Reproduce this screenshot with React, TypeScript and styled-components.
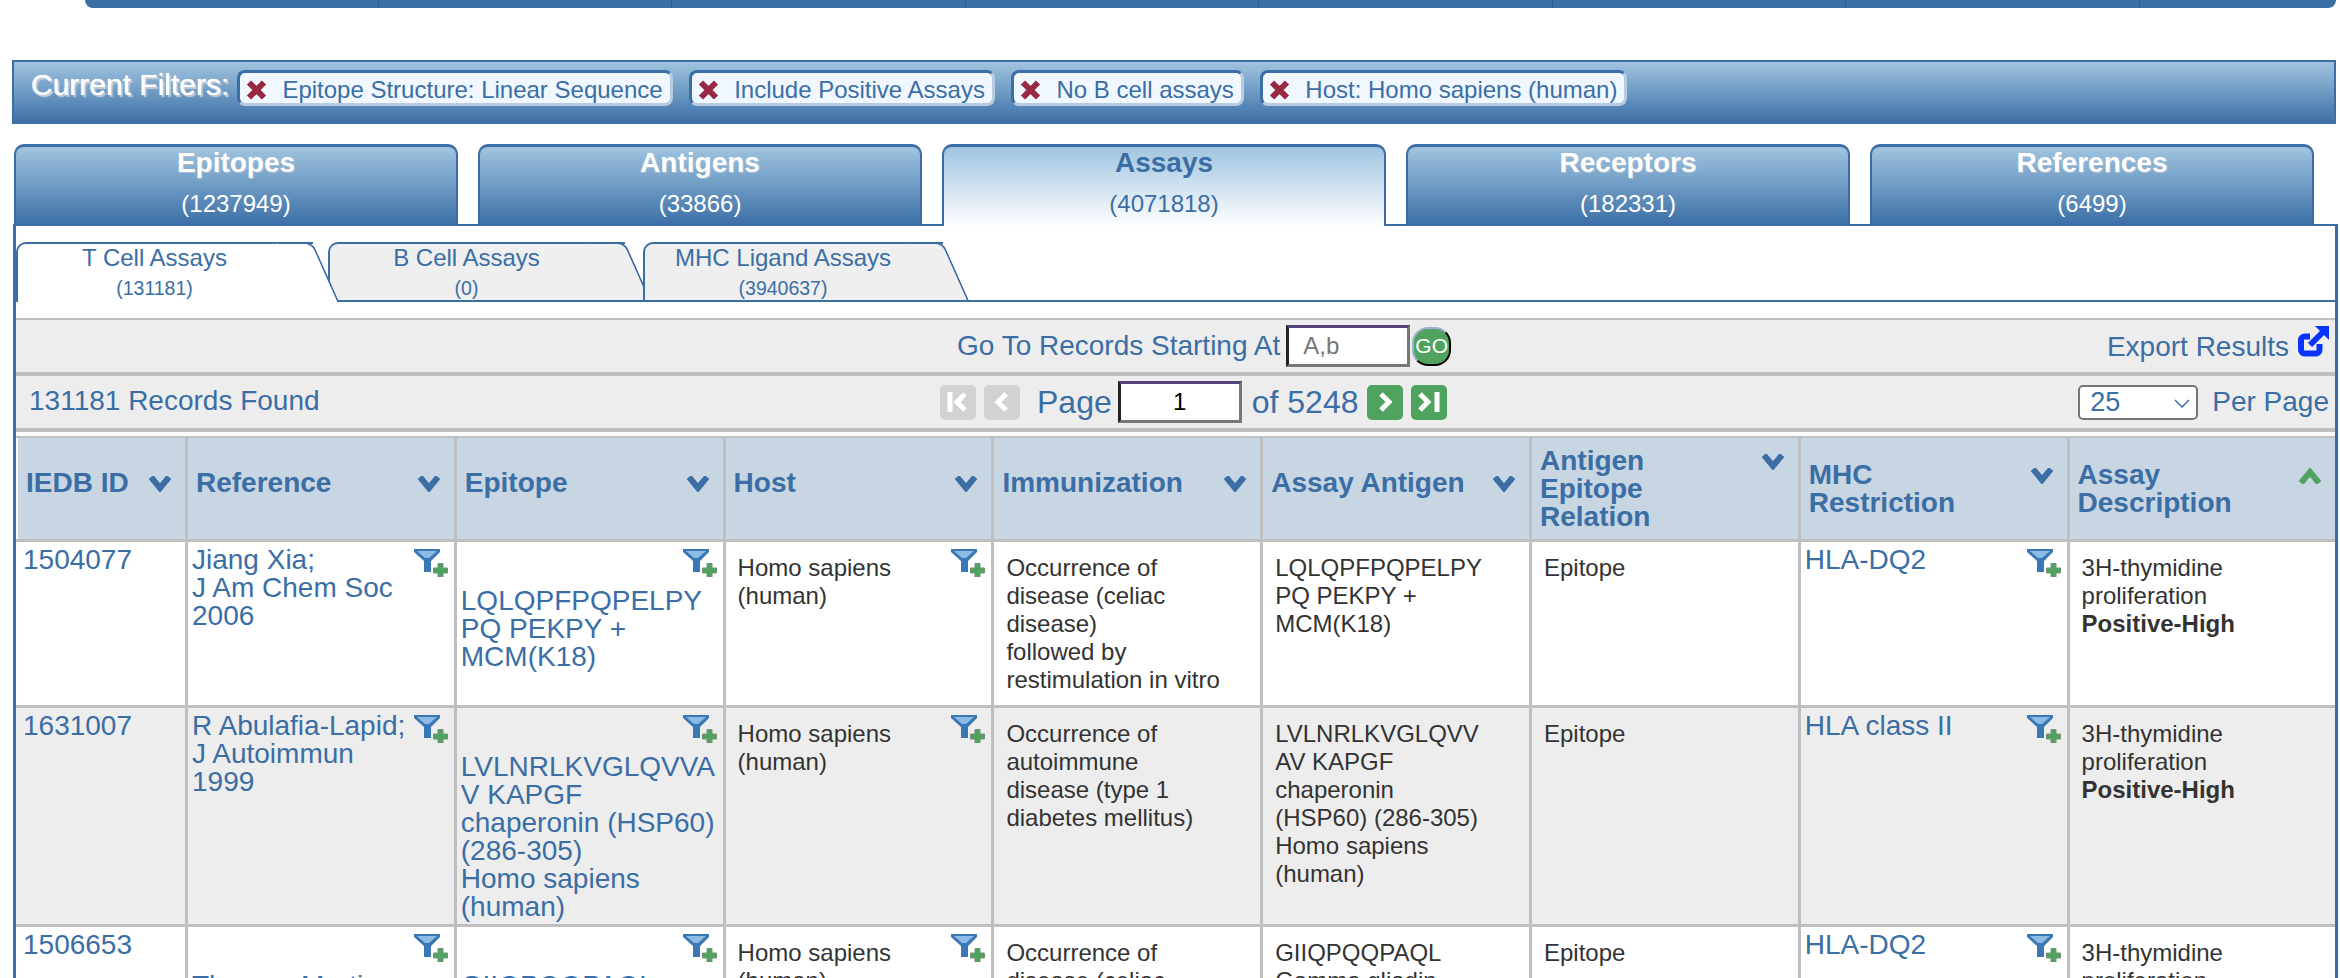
import React from 'react';
import styled, { createGlobalStyle } from 'styled-components';

const BLUE = '#3a6ea5';
const GREEN = '#50a35f';
const GRID = '#bfbfbf';
const BAND = '#ededed';

type RowData = {
    id: string,
    reference: string[],
    epitope: string[],
    host: string[],
    process: string[],
    antigen: string[],
    mhc: string,
    shaded?: boolean,
}

const FILTERS = [
    'Epitope Structure: Linear Sequence',
    'Include Positive Assays',
    'No B cell assays',
    'Host: Homo sapiens (human)',
];

const MAIN_TABS = [
    { label: 'Epitopes', count: 1237949 },
    { label: 'Antigens', count: 33866 },
    { label: 'Assays', count: 4071818, active: true },
    { label: 'Receptors', count: 182331 },
    { label: 'References', count: 6499 },
];

const SUB_TABS = [
    { label: 'T Cell Assays', count: 131181, active: true, width: 297, gap: 15, layer: 3 },
    { label: 'B Cell Assays', count: 0, width: 297, gap: 18, layer: 1 },
    { label: 'MHC Ligand Assays', count: 3940637, width: 300, gap: 0, layer: 2 },
];

const COLUMNS = [
    { label: ['IEDB ID'] },
    { label: ['Reference'] },
    { label: ['Epitope'] },
    { label: ['Host'] },
    { label: ['Immunization'] },
    { label: ['Assay Antigen'] },
    { label: ['Antigen', 'Epitope', 'Relation'] },
    { label: ['MHC', 'Restriction'] },
    { label: ['Assay', 'Description'], ascending: true },
];

const ROWS: RowData[] = [
    {
        id: '1504077',
        reference: ['Jiang Xia;', 'J Am Chem Soc', '2006'],
        epitope: ['LQLQPFPQPELPY', 'PQ PEKPY +', 'MCM(K18)'],
        host: ['Homo sapiens', '(human)'],
        process: ['Occurrence of', 'disease (celiac', 'disease)', 'followed by', 'restimulation in vitro'],
        antigen: ['LQLQPFPQPELPY', 'PQ PEKPY +', 'MCM(K18)'],
        mhc: 'HLA-DQ2',
    },
    {
        id: '1631007',
        reference: ['R Abulafia-Lapid;', 'J Autoimmun', '1999'],
        epitope: ['LVLNRLKVGLQVVA', 'V KAPGF', 'chaperonin (HSP60)', '(286-305)', 'Homo sapiens', '(human)'],
        host: ['Homo sapiens', '(human)'],
        process: ['Occurrence of', 'autoimmune', 'disease (type 1', 'diabetes mellitus)'],
        antigen: ['LVLNRLKVGLQVV', 'AV KAPGF', 'chaperonin', '(HSP60) (286-305)', 'Homo sapiens', '(human)'],
        mhc: 'HLA class II',
        shaded: true,
    },
    {
        id: '1506653',
        reference: ['Thomas Martin;'],
        epitope: ['GIIQPQQPAQL', 'Gamma gliadin'],
        host: ['Homo sapiens', '(human)'],
        process: ['Occurrence of', 'disease (celiac'],
        antigen: ['GIIQPQQPAQL', 'Gamma gliadin'],
        mhc: 'HLA-DQ2',
    },
];

const GlobalStyle = createGlobalStyle`
    html, body {
        margin: 0;
        height: 978px;
        overflow: hidden;
        background: #fff;
        font-family: "Liberation Sans", Arial, sans-serif;
    }
    * {
        box-sizing: border-box;
    }
`;

const TopBar = styled.div`
    display: flex;
    height: 8px;
    margin: 0 4px 0 85px;
    background: ${BLUE};
    border-radius: 0 0 15px 15px;
    overflow: hidden;
`;

const TopBarItem = styled.div`
    flex: 0 0 293.5px;
    border-right: 1px solid #2f5f92;

    &:last-child {
        flex: 1;
        border-right: 0;
    }
`;

const FilterBar = styled.div`
    display: flex;
    align-items: flex-start;
    gap: 16.5px;
    height: 64px;
    margin: 52px 4px 0 12px;
    padding: 8px 0 0 17px;
    background: linear-gradient(#a0c4e0, ${BLUE});
    border: 2px solid ${BLUE};
    border-bottom: 0;
`;

const FilterTitle = styled.span`
    margin: -2px -8.5px 0 0;
    font-size: 30px;
    line-height: 34px;
    color: #fff;
    text-shadow: 0 0 1px #fff, 2px 2px 1px #c3cbd8;
`;

const FilterChip = styled.div`
    display: flex;
    align-items: center;
    height: 36px;
    padding: 3px 7px 0 6px;
    background: #f0f7ff;
    border: 3px solid;
    border-color: ${BLUE} #b7cbe2 #b7cbe2 ${BLUE};
    border-radius: 8px;
    font-size: 24px;
    color: ${BLUE};
    white-space: nowrap;
`;

const RemoveIcon = styled.svg`
    width: 21px;
    height: 20px;
    margin-right: 15px;
`;

const MainTabs = styled.div`
    display: flex;
    gap: 20px;
    margin: 20px 0 0 14px;
`;

const MainTab = styled.div<{ $active?: boolean }>`
    position: relative;
    z-index: 1;
    display: flex;
    flex-direction: column;
    align-items: center;
    width: 444px;
    height: 82px;
    background: ${p => (p.$active ? 'linear-gradient(#a0c4e0, #fff)' : `linear-gradient(#a0c4e0, ${BLUE})`)};
    border: 2px solid ${BLUE};
    border-top-width: 3px;
    border-bottom: 0;
    border-radius: 10px 10px 0 0;
    color: ${p => (p.$active ? BLUE : '#fff')};
`;

const MainTabLabel = styled.span<{ $active?: boolean }>`
    font-size: 28px;
    font-weight: bold;
    line-height: 32px;
    text-shadow: ${p => (p.$active ? 'none' : '1px 1px 1px #a9bdd4')};
`;

const MainTabCount = styled.span`
    margin-top: 11px;
    font-size: 24px;
    line-height: 28px;
`;

const Panel = styled.div`
    width: 2325px;
    height: 756px;
    margin: -2px 0 0 13px;
    overflow: hidden;
    border: 3px solid ${BLUE};
    border-top-width: 2px;
    border-bottom: 0;
`;

const SubTabs = styled.div`
    display: flex;
    height: 60px;
    margin-top: 16px;
    border-bottom: 2px solid ${BLUE};
`;

const SubTab = styled.div<{ $active?: boolean; $width: number; $gap: number; $layer: number }>`
    position: relative;
    z-index: ${p => p.$layer};
    display: flex;
    flex-direction: column;
    align-items: center;
    flex: 0 0 ${p => p.$width}px;
    height: ${p => (p.$active ? '60px' : '58px')};
    margin-right: ${p => p.$gap}px;
    padding-right: 22px;
    background: ${p => (p.$active ? '#fff' : '#efefef')};
    border: 2px solid ${BLUE};
    border-width: 2px 0 0 2px;
    border-radius: 10px 0 0 0;
    color: ${BLUE};

    &::after {
        content: '';
        position: absolute;
        top: -2px;
        bottom: 0;
        right: -13px;
        width: 34px;
        background: inherit;
        border: 2px solid ${BLUE};
        border-width: 2px 2px 0 0;
        border-radius: 0 8px 0 0;
        transform: skewX(24deg);
        z-index: -1;
    }
`;

const SubTabLabel = styled.span`
    font-size: 24px;
    line-height: 28px;
`;

const SubTabCount = styled.span`
    margin-top: 5px;
    font-size: 19.5px;
    line-height: 22px;
`;

const ToolRow = styled.div<{ $first?: boolean; $last?: boolean; $columns: string }>`
    display: grid;
    grid-template-columns: ${p => p.$columns};
    align-items: center;
    height: 52px;
    margin-top: ${p => (p.$first ? '16px' : '0')};
    padding-right: 6px;
    background: ${BAND};
    box-sizing: content-box;
    border-top: ${p => (p.$first ? '2px' : '4px')} solid ${GRID};
    border-bottom: ${p => (p.$last ? `4px solid ${GRID}` : '0')};
    font-size: 28px;
    color: ${BLUE};
`;

const RecordCount = styled.span`
    padding: 0 0 3px 13px;
`;

const Inline = styled.div`
    display: flex;
    align-items: center;
`;

const PagerGroup = styled.div`
    display: flex;
    gap: 8px;
`;

const TextInput = styled.input<{ $center?: boolean; $offset?: number }>`
    width: 124px;
    height: 42px;
    margin-left: ${p => p.$offset ?? 0}px;
    padding: 0 ${p => (p.$center ? '0' : '14px')};
    background: #fff;
    border: 3px solid;
    border-color: #55417c #777 #777 #222;
    border-radius: 0;
    font-family: inherit;
    font-size: 24px;
    color: #000;
    text-align: ${p => (p.$center ? 'center' : 'left')};

    &::placeholder {
        color: #777;
        opacity: 1;
    }
`;

const GoButton = styled.button`
    width: 39px;
    height: 39px;
    margin-left: 2px;
    padding: 0;
    background: ${GREEN};
    border: 2px solid;
    border-color: #9fb0c8 #000 #000 #9fb0c8;
    border-radius: 16px;
    font-family: inherit;
    font-size: 21px;
    color: #fff;
`;

const ExportLink = styled.a`
    display: flex;
    align-items: flex-start;
    gap: 9px;
    margin-top: -4px;
    line-height: 31px;
`;

const ExportText = styled.span`
    padding-top: 5px;
`;

const PageButton = styled.button<{ $disabled?: boolean }>`
    display: flex;
    align-items: center;
    justify-content: center;
    width: 36px;
    height: 35px;
    padding: 0;
    background: ${p => (p.$disabled ? '#d2d2d2' : GREEN)};
    border: 0;
    border-radius: 5px;

    svg {
        width: 22px;
        height: 20px;
    }
`;

const PageText = styled.span`
    margin: 0 6px 0 17px;
    font-size: 32px;
`;

const PageOf = styled.span`
    margin: 0 8px 0 10px;
    font-size: 32px;
`;

const SizeSelect = styled.div`
    position: relative;
    width: 120px;
    height: 35px;
`;

const SizeField = styled.select`
    appearance: none;
    display: block;
    width: 100%;
    height: 100%;
    padding: 0 0 0 10px;
    background: #fff;
    border: 2px solid #777;
    border-radius: 5px;
    font-family: inherit;
    font-size: 27px;
    color: ${BLUE};
`;

const SizeArrow = styled.svg`
    position: absolute;
    top: 14px;
    right: 8px;
    width: 16px;
    height: 9px;
    pointer-events: none;
`;

const PerPage = styled.span`
    margin-left: 14px;
`;

const Table = styled.div`
    display: grid;
    grid-template-columns: 169px repeat(7, 265.8px) 265.4px;
    gap: 3px;
    margin-top: 4px;
    padding-top: 2px;
    background: ${GRID};
`;

const HeadCell = styled.div<{ $single?: boolean }>`
    display: flex;
    align-items: center;
    height: 101px;
    padding: 0 13px ${p => (p.$single ? '12px' : '0')} 8px;
    background: #c8d5e2;

    &:first-child {
        border-left: 2px solid #fff;
    }
`;

const HeadInner = styled.div`
    display: flex;
    justify-content: space-between;
    width: 100%;
    font-size: 28px;
    font-weight: bold;
    line-height: 28px;
    color: ${BLUE};
`;

const SortIcon = styled.svg`
    flex: none;
    width: 24px;
    height: 16px;
    margin-top: 7px;
`;

const Cell = styled.div<{ $shaded?: boolean; $left: number; $top: number; $bottom?: number; $link?: boolean }>`
    position: relative;
    padding: ${p => p.$top}px 0 ${p => p.$bottom ?? 0}px ${p => p.$left}px;
    background: ${p => (p.$shaded ? BAND : '#fff')};
    font-size: ${p => (p.$link ? '28px' : '24px')};
    line-height: 28px;
    color: ${p => (p.$link ? BLUE : '#333')};
    white-space: nowrap;
`;

const FilterIcon = styled.svg`
    position: absolute;
    top: 7px;
    right: 6px;
    width: 34px;
    height: 28px;
`;

function Lines({ items }: { items: string[] }) {
    return (
        <>
            {items.map(line => (
                <div key={line}>{line}</div>
            ))}
        </>
    );
}

function AddFilter() {
    return (
        <FilterIcon viewBox="0 0 34 28">
            <polygon points="0,0 26,0 26,3 17,12 17,23 10,23 10,12 0,3" fill="#3a78b5" />
            <polygon points="3,2 23,2 15,9 11,9" fill="#8cbce6" />
            <path d="M24 14.5h5v4.500h4.500v5h-4.500v4h-5v-4h-4.500v-5h4.500z" fill={GREEN} stroke="#74917b" />
        </FilterIcon>
    );
}

function PagerGlyph({ kind }: { kind: 'first' | 'prev' | 'next' | 'last' }) {
    return (
        <svg viewBox="0 0 22 20" fill="none" stroke="#fff" strokeWidth="5">
            {kind === 'first' && <><path d="M3 0v20" /><path d="M18 2l-8 8 8 8" /></>}
            {kind === 'prev' && <path d="M15 2l-8 8 8 8" />}
            {kind === 'next' && <path d="M7 2l8 8-8 8" />}
            {kind === 'last' && <><path d="M2 2l8 8-8 8" /><path d="M19 0v20" /></>}
        </svg>
    );
}

export default function App(): JSX.Element {
    return (
        <>
            <GlobalStyle />
            <TopBar>
                {Array.from({ length: 8 }).map((_, i) => <TopBarItem key={i} />)}
            </TopBar>

            <FilterBar>
                <FilterTitle>Current Filters:</FilterTitle>
                {FILTERS.map(filter => (
                    <FilterChip key={filter}>
                        <RemoveIcon viewBox="0 0 21 20">
                            <path d="M3 2.500l15 15M18 2.500l-15 15" stroke="#992843" strokeWidth="6" />
                        </RemoveIcon>
                        {filter}
                    </FilterChip>
                ))}
            </FilterBar>

            <MainTabs>
                {MAIN_TABS.map(tab => (
                    <MainTab key={tab.label} $active={tab.active}>
                        <MainTabLabel $active={tab.active}>{tab.label}</MainTabLabel>
                        <MainTabCount>({tab.count})</MainTabCount>
                    </MainTab>
                ))}
            </MainTabs>

            <Panel>
                <SubTabs>
                    {SUB_TABS.map(tab => (
                        <SubTab key={tab.label} $active={tab.active} $width={tab.width} $gap={tab.gap} $layer={tab.layer}>
                            <SubTabLabel>{tab.label}</SubTabLabel>
                            <SubTabCount>({tab.count})</SubTabCount>
                        </SubTab>
                    ))}
                </SubTabs>

                <ToolRow $first $columns="941px 1fr auto">
                    <span />
                    <Inline>
                        Go To Records Starting At
                        <TextInput $offset={6} placeholder="A,b" />
                        <GoButton>GO</GoButton>
                    </Inline>
                    <ExportLink>
                        <ExportText>Export Results</ExportText>
                        <svg width="31" height="31" viewBox="0 0 31 31" fill="none">
                            <path d="M12 10.500H6.500a3.500 3.500 0 0 0-3.500 3.500V24a3.500 3.500 0 0 0 3.500 3.500H18a3.500 3.500 0 0 0 3.500-3.500v-6" stroke="#0a33ff" strokeWidth="6" />
                            <path d="M17 0h14v14z" fill="#0a33ff" />
                            <path d="M25 6L12 19" stroke="#0a33ff" strokeWidth="6" />
                        </svg>
                    </ExportLink>
                </ToolRow>

                <ToolRow $last $columns="924px 1fr auto">
                    <RecordCount>131181 Records Found</RecordCount>
                    <Inline>
                        <PagerGroup>
                            <PageButton $disabled><PagerGlyph kind="first" /></PageButton>
                            <PageButton $disabled><PagerGlyph kind="prev" /></PageButton>
                        </PagerGroup>
                        <PageText>Page</PageText>
                        <TextInput $center defaultValue="1" />
                        <PageOf>of 5248</PageOf>
                        <PagerGroup>
                            <PageButton><PagerGlyph kind="next" /></PageButton>
                            <PageButton><PagerGlyph kind="last" /></PageButton>
                        </PagerGroup>
                    </Inline>
                    <Inline>
                        <SizeSelect>
                            <SizeField defaultValue="25">
                                <option>25</option>
                            </SizeField>
                            <SizeArrow viewBox="0 0 16 9" fill="none">
                                <path d="M1 1l7 7 7-7" stroke={BLUE} strokeWidth="1.500" />
                            </SizeArrow>
                        </SizeSelect>
                        <PerPage>Per Page</PerPage>
                    </Inline>
                </ToolRow>

                <Table>
                    {COLUMNS.map(column => (
                        <HeadCell key={column.label[0]} $single={column.label.length === 1}>
                            <HeadInner>
                                <div><Lines items={column.label} /></div>
                                <SortIcon viewBox="0 0 24 16" fill="none">
                                    <path
                                        d={column.ascending ? 'M3 15l9-11 9 11' : 'M3 1l9 11 9-11'}
                                        stroke={column.ascending ? GREEN : BLUE}
                                        strokeWidth="6"
                                    />
                                </SortIcon>
                            </HeadInner>
                        </HeadCell>
                    ))}

                    {ROWS.map(row => (
                        <React.Fragment key={row.id}>
                            <Cell $shaded={row.shaded} $link $left={7} $top={4}>{row.id}</Cell>
                            <Cell $shaded={row.shaded} $link $left={4} $top={row.reference.length === 1 ? 45 : 4}>
                                <Lines items={row.reference} />
                                <AddFilter />
                            </Cell>
                            <Cell $shaded={row.shaded} $link $left={4} $top={45} $bottom={3}>
                                <Lines items={row.epitope} />
                                <AddFilter />
                            </Cell>
                            <Cell $shaded={row.shaded} $left={12} $top={12}>
                                <Lines items={row.host} />
                                <AddFilter />
                            </Cell>
                            <Cell $shaded={row.shaded} $left={12} $top={12} $bottom={11}>
                                <Lines items={row.process} />
                            </Cell>
                            <Cell $shaded={row.shaded} $left={12} $top={12}>
                                <Lines items={row.antigen} />
                            </Cell>
                            <Cell $shaded={row.shaded} $left={12} $top={12}>Epitope</Cell>
                            <Cell $shaded={row.shaded} $link $left={4} $top={4}>
                                {row.mhc}
                                <AddFilter />
                            </Cell>
                            <Cell $shaded={row.shaded} $left={12} $top={12}>
                                3H-thymidine<br />
                                proliferation<br />
                                <b>Positive-High</b>
                            </Cell>
                        </React.Fragment>
                    ))}
                </Table>
            </Panel>
        </>
    );
}
